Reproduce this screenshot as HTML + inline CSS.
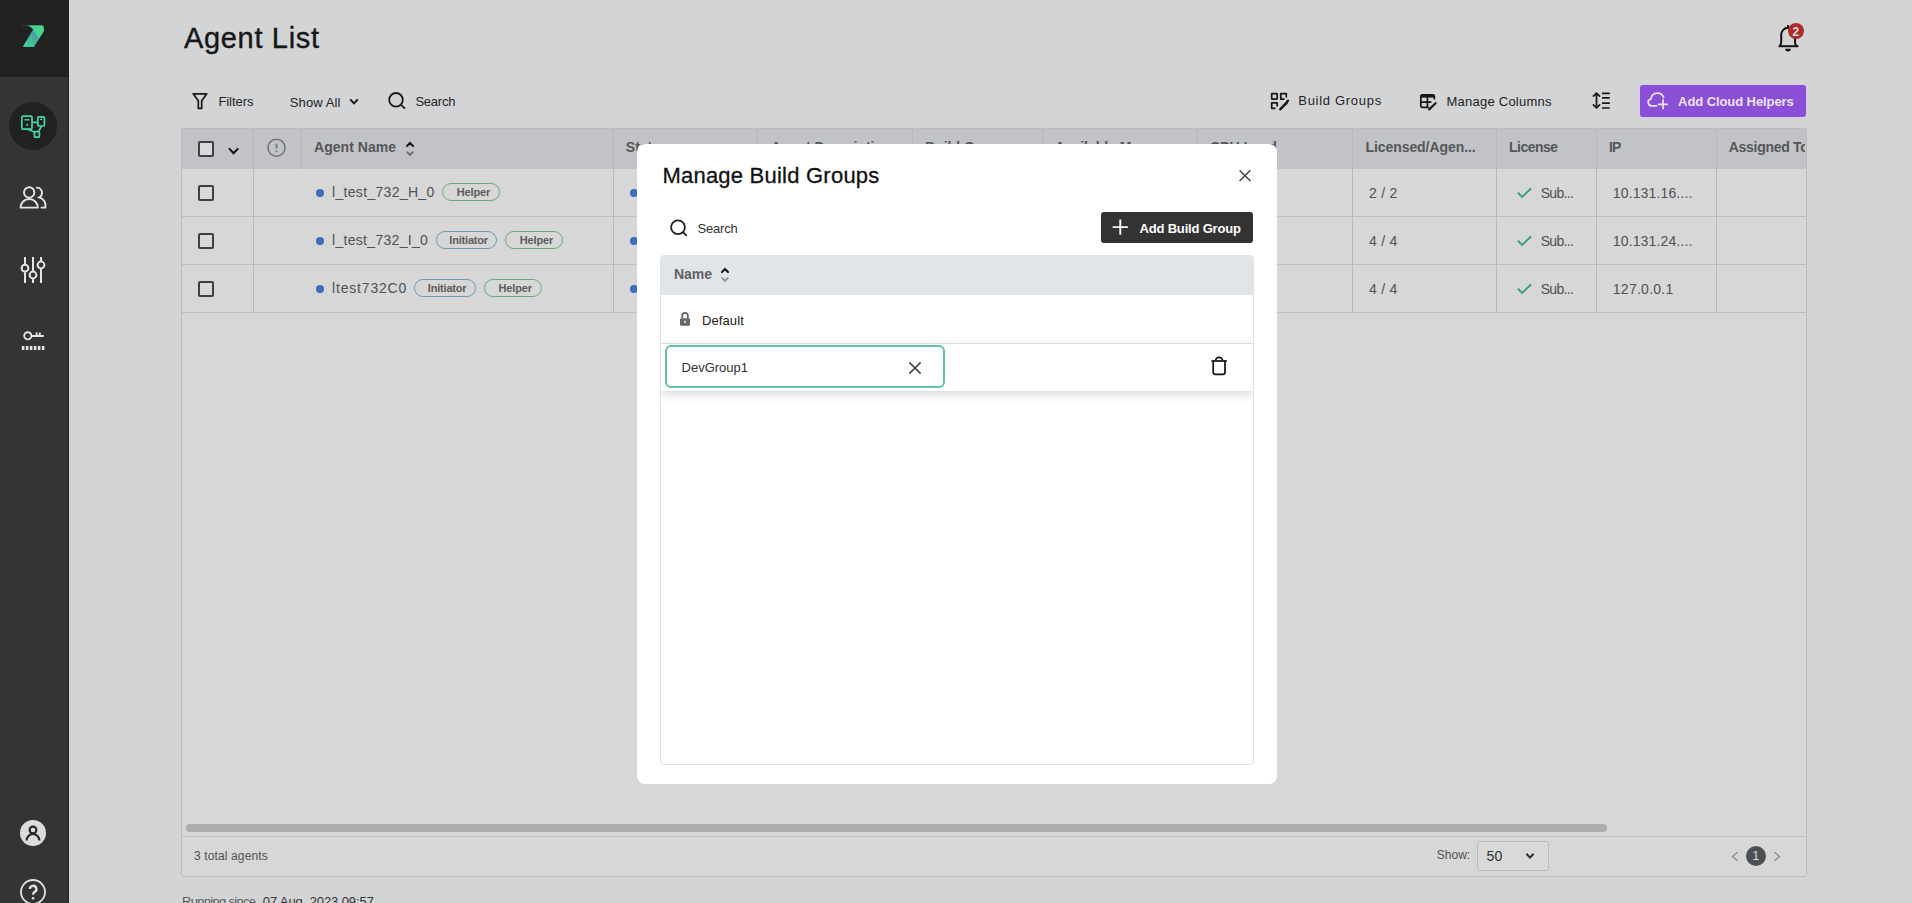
<!DOCTYPE html>
<html><head><meta charset="utf-8">
<style>
*{box-sizing:border-box;margin:0;padding:0}
html,body{width:1912px;height:903px;overflow:hidden}
body{font-family:"Liberation Sans",sans-serif;background:#f8f9fb;position:relative}
.a{position:absolute}
.t{position:absolute;white-space:nowrap;line-height:1}
svg{position:absolute;overflow:visible}
</style></head><body>
<div class="t" style="left:184px;top:24.25px;font-size:29px;color:#1b1c1d;letter-spacing:0.67px;-webkit-text-stroke:0.4px #1b1c1d;">Agent List</div>
<svg style="left:1770px;top:18px" width="40" height="40" viewBox="0 0 40 40" fill="none" stroke="#161616" stroke-width="2" stroke-linejoin="round">
<path d="M8.6 28.2 H28.4"/>
<path d="M9.6 28.2 Q11.2 26.6 11.2 23.8 V17 A6.9 7.2 0 0 1 25 17 V23.8 Q25 26.6 26.6 28.2"/>
<path d="M18 7 V10.4"/>
<path d="M15.2 30.8 A2.8 2.6 0 0 0 20.8 30.8 Z" fill="#161616" stroke="none"/>
</svg><div class="a" style="left:1788px;top:23px;width:16.4px;height:16.4px;border-radius:50%;background:#cc3430"></div><div class="t" style="left:1792.6px;top:25.64px;font-size:12px;color:#fff;font-weight:bold;">2</div>
<svg style="left:190px;top:90px" width="20" height="22" viewBox="0 0 20 22" fill="none" stroke="#1e1e1e" stroke-width="1.7" stroke-linejoin="round">
<path d="M3.2 3.8 H16.8 L11.7 10.8 V18.4 H8.3 V10.8 Z" stroke-linejoin="round"/>
</svg><div class="t" style="left:218.4px;top:94.70px;font-size:13px;color:#2b2c2d;letter-spacing:-0.06px;">Filters</div>
<div class="t" style="left:289.8px;top:95.50px;font-size:13px;color:#2b2c2d;letter-spacing:0.11px;">Show All</div>
<svg style="left:346px;top:94px" width="16" height="16" viewBox="0 0 16 16" fill="none" stroke="#1e1e1e" stroke-width="2">
<path d="M4.2 5.4 L8 9.4 L11.8 5.4"/></svg><svg style="left:386px;top:90px" width="22" height="22" viewBox="0 0 22 22" fill="none" stroke="#1e1e1e" stroke-width="1.8">
<circle cx="10" cy="9.8" r="6.8"/><path d="M15 14.8 L19 18.6"/></svg><div class="t" style="left:415.4px;top:94.70px;font-size:13px;color:#2b2c2d;letter-spacing:-0.24px;">Search</div>
<svg style="left:1262px;top:84px" width="36" height="36" viewBox="0 0 36 36" fill="none" stroke="#1a1a1a" stroke-width="1.7" stroke-linejoin="round">
<rect x="9.7" y="9.7" width="5.5" height="5.5" rx="0.6"/>
<path d="M22.6 15.2 H18.8 V9.7 H24.3 V13.6"/>
<path d="M13.5 24.3 H9.7 V18.8 H15.2 V22.5"/>
<path d="M24.8 18.6 L18.4 25.2" stroke-width="2.6" stroke-linecap="round"/>
<path d="M25.3 17.4 L26 16.7" stroke-width="2.4" stroke-linecap="round"/>
</svg><div class="t" style="left:1298.3px;top:94.20px;font-size:13px;color:#2b2c2d;letter-spacing:0.70px;">Build Groups</div>
<svg style="left:1412px;top:84px" width="36" height="36" viewBox="0 0 36 36" fill="none" stroke="#1a1a1a" stroke-width="1.7" stroke-linejoin="round">
<path d="M22.4 15.4 V12.6 A1.8 1.8 0 0 0 20.6 10.8 H10.6 A1.8 1.8 0 0 0 8.8 12.6 V21.6 A1.8 1.8 0 0 0 10.6 23.4 H16.8"/>
<rect x="8.8" y="10.8" width="13.6" height="2.8" fill="#1a1a1a" stroke="none"/>
<path d="M8.8 18.1 H19.4 M15.4 13 V23.4"/>
<path d="M23.6 19.2 L17.2 25.4" stroke-width="2.2" stroke-linecap="round"/>
</svg><div class="t" style="left:1446.5px;top:94.90px;font-size:13px;color:#2b2c2d;letter-spacing:0.24px;">Manage Columns</div>
<svg style="left:1590px;top:90px" width="22" height="22" viewBox="0 0 22 22" fill="none" stroke="#1e1e1e" stroke-width="1.8">
<path d="M6.5 3 V18 M3.4 6.2 L6.5 3 L9.6 6.2 M3.4 14.8 L6.5 18 L9.6 14.8" stroke-width="1.7" stroke-linecap="round" stroke-linejoin="round"/>
<path d="M12 3.3 H19.8 M12 7.9 H19.8 M12 13.2 H19.8 M12 18 H19.8" stroke-width="1.7"/>
</svg><div class="a" style="left:181px;top:128px;width:1626px;height:749px;background:#fdfdfd;border:1px solid #dcdddf;border-radius:0 0 3px 3px"></div><div class="a" style="left:182px;top:129px;width:1624px;height:40px;background:#e3e6e9"></div><div class="a" style="left:253px;top:129px;width:1px;height:184px;background:#d6d8da"></div><div class="a" style="left:613px;top:129px;width:1px;height:184px;background:#d6d8da"></div><div class="a" style="left:757px;top:129px;width:1px;height:184px;background:#d6d8da"></div><div class="a" style="left:912px;top:129px;width:1px;height:184px;background:#d6d8da"></div><div class="a" style="left:1042px;top:129px;width:1px;height:184px;background:#d6d8da"></div><div class="a" style="left:1197px;top:129px;width:1px;height:184px;background:#d6d8da"></div><div class="a" style="left:1352px;top:129px;width:1px;height:184px;background:#d6d8da"></div><div class="a" style="left:1496px;top:129px;width:1px;height:184px;background:#d6d8da"></div><div class="a" style="left:1596px;top:129px;width:1px;height:184px;background:#d6d8da"></div><div class="a" style="left:1716px;top:129px;width:1px;height:184px;background:#d6d8da"></div><div class="a" style="left:301px;top:129px;width:1px;height:40px;background:#d6d8da"></div><div class="a" style="left:182px;top:216px;width:1624px;height:1px;background:#dfe0e2"></div><div class="a" style="left:182px;top:264px;width:1624px;height:1px;background:#dfe0e2"></div><div class="a" style="left:182px;top:312px;width:1624px;height:1px;background:#dfe0e2"></div><div class="a" style="left:198px;top:141px;width:16px;height:16px;border:2px solid #4a4a4a;border-radius:2px;background:#fff"></div><svg style="left:224px;top:140px" width="20" height="20" viewBox="0 0 20 20" fill="none" stroke="#111" stroke-width="2">
<path d="M5 8.4 L9.6 13.2 L14.2 8.4"/></svg><svg style="left:264px;top:135px" width="26" height="26" viewBox="0 0 26 26" fill="none" stroke="#85888b" stroke-width="1.6">
<circle cx="12.5" cy="12.7" r="8.5"/><path d="M12.5 8.6 V13.4" stroke-width="1.8"/><circle cx="12.5" cy="16.3" r="1" fill="#85888b" stroke="none"/></svg><div class="t" style="left:314px;top:140.15px;font-size:14px;color:#646769;font-weight:bold;letter-spacing:0.04px;">Agent Name</div>
<svg style="left:404px;top:140px" width="12" height="18" viewBox="0 0 12 18" fill="none" stroke-width="1.7" stroke-linecap="round">
<path d="M3 6 L6 3 L9 6" stroke="#161616" stroke-width="2.1"/><path d="M3.2 12.2 L6 15 L8.8 12.2" stroke="#7d8083" stroke-width="1.9"/></svg><div class="t" style="left:625.8px;top:140.15px;font-size:14px;color:#646769;font-weight:bold;">Status</div>
<div class="t" style="left:771px;top:140.15px;font-size:14px;color:#646769;font-weight:bold;">Agent Description</div>
<div class="t" style="left:925px;top:140.15px;font-size:14px;color:#646769;font-weight:bold;">Build Groups</div>
<div class="t" style="left:1055px;top:140.15px;font-size:14px;color:#646769;font-weight:bold;">Available Memory</div>
<div class="t" style="left:1210px;top:140.15px;font-size:14px;color:#646769;font-weight:bold;">CPU Load</div>
<div class="t" style="left:1365.4px;top:140.35px;font-size:14px;color:#646769;font-weight:bold;letter-spacing:-0.06px;">Licensed/Agen...</div>
<div class="t" style="left:1509px;top:140.35px;font-size:14px;color:#646769;font-weight:bold;letter-spacing:-0.52px;">License</div>
<div class="t" style="left:1609px;top:140.35px;font-size:14px;color:#646769;font-weight:bold;letter-spacing:-0.83px;">IP</div>
<div class="a" style="left:1717px;top:129px;width:88px;height:40px;overflow:hidden"><div class="t" style="left:11.8px;top:11.35px;font-size:14px;color:#646769;font-weight:bold;letter-spacing:-0.30px;">Assigned To</div>
</div><div class="a" style="left:198px;top:185px;width:16px;height:16px;border:2px solid #4a4a4a;border-radius:2px;background:#fff"></div><div class="a" style="left:316px;top:189px;width:8px;height:8px;border-radius:50%;background:#4a7fd9"></div><div class="t" style="left:332px;top:185.15px;font-size:14px;color:#5e6163;letter-spacing:0.32px;">l_test_732_H_0</div>
<div class="a" style="left:442px;top:183px;width:58px;height:18px;border:1.2px solid #7cc98a;border-radius:9px"></div><div class="t" style="left:456.65px;top:187.29px;font-size:11px;color:#6a6d70;font-weight:bold;letter-spacing:-0.11px;">Helper</div>
<div class="a" style="left:630px;top:189px;width:8px;height:8px;border-radius:50%;background:#4a7fd9"></div><div class="t" style="left:1368.9px;top:186.45px;font-size:14px;color:#5e6163;letter-spacing:0.29px;">2 / 2</div>
<svg style="left:1514px;top:182px" width="22" height="22" viewBox="0 0 22 22" fill="none" stroke="#4ab995" stroke-width="1.9">
<path d="M3.9 10.8 L8.2 14.9 L17.2 6.2"/></svg><div class="t" style="left:1540.7px;top:186.45px;font-size:14px;color:#5e6163;letter-spacing:-0.66px;">Sub...</div>
<div class="t" style="left:1612.8px;top:186.45px;font-size:14px;color:#5e6163;letter-spacing:0.14px;">10.131.16....</div>
<div class="a" style="left:198px;top:233px;width:16px;height:16px;border:2px solid #4a4a4a;border-radius:2px;background:#fff"></div><div class="a" style="left:316px;top:237px;width:8px;height:8px;border-radius:50%;background:#4a7fd9"></div><div class="t" style="left:332px;top:233.15px;font-size:14px;color:#5e6163;letter-spacing:0.31px;">l_test_732_I_0</div>
<div class="a" style="left:436px;top:231px;width:60.5px;height:18px;border:1.2px solid #7fb6d6;border-radius:9px"></div><div class="t" style="left:449.35px;top:235.29px;font-size:11px;color:#6a6d70;font-weight:bold;letter-spacing:-0.19px;">Initiator</div>
<div class="a" style="left:505px;top:231px;width:58px;height:18px;border:1.2px solid #7cc98a;border-radius:9px"></div><div class="t" style="left:519.65px;top:235.29px;font-size:11px;color:#6a6d70;font-weight:bold;letter-spacing:-0.11px;">Helper</div>
<div class="a" style="left:630px;top:237px;width:8px;height:8px;border-radius:50%;background:#4a7fd9"></div><div class="t" style="left:1368.9px;top:234.45px;font-size:14px;color:#5e6163;letter-spacing:0.29px;">4 / 4</div>
<svg style="left:1514px;top:230px" width="22" height="22" viewBox="0 0 22 22" fill="none" stroke="#4ab995" stroke-width="1.9">
<path d="M3.9 10.8 L8.2 14.9 L17.2 6.2"/></svg><div class="t" style="left:1540.7px;top:234.45px;font-size:14px;color:#5e6163;letter-spacing:-0.66px;">Sub...</div>
<div class="t" style="left:1612.8px;top:234.45px;font-size:14px;color:#5e6163;letter-spacing:0.14px;">10.131.24....</div>
<div class="a" style="left:198px;top:281px;width:16px;height:16px;border:2px solid #4a4a4a;border-radius:2px;background:#fff"></div><div class="a" style="left:316px;top:285px;width:8px;height:8px;border-radius:50%;background:#4a7fd9"></div><div class="t" style="left:332px;top:281.15px;font-size:14px;color:#5e6163;letter-spacing:0.82px;">ltest732C0</div>
<div class="a" style="left:414px;top:279px;width:61.5px;height:18px;border:1.2px solid #7fb6d6;border-radius:9px"></div><div class="t" style="left:427.85px;top:283.29px;font-size:11px;color:#6a6d70;font-weight:bold;letter-spacing:-0.19px;">Initiator</div>
<div class="a" style="left:484px;top:279px;width:57.5px;height:18px;border:1.2px solid #7cc98a;border-radius:9px"></div><div class="t" style="left:498.4px;top:283.29px;font-size:11px;color:#6a6d70;font-weight:bold;letter-spacing:-0.11px;">Helper</div>
<div class="a" style="left:630px;top:285px;width:8px;height:8px;border-radius:50%;background:#4a7fd9"></div><div class="t" style="left:1368.9px;top:282.45px;font-size:14px;color:#5e6163;letter-spacing:0.29px;">4 / 4</div>
<svg style="left:1514px;top:278px" width="22" height="22" viewBox="0 0 22 22" fill="none" stroke="#4ab995" stroke-width="1.9">
<path d="M3.9 10.8 L8.2 14.9 L17.2 6.2"/></svg><div class="t" style="left:1540.7px;top:282.45px;font-size:14px;color:#5e6163;letter-spacing:-0.66px;">Sub...</div>
<div class="t" style="left:1612.8px;top:282.45px;font-size:14px;color:#5e6163;letter-spacing:0.26px;">127.0.0.1</div>
<div class="a" style="left:186px;top:824px;width:1421px;height:8px;border-radius:4px;background:#cbcccd"></div><div class="a" style="left:182px;top:836px;width:1624px;height:1px;background:#e4e5e6"></div><div class="t" style="left:193.9px;top:849.54px;font-size:12px;color:#5e6163;letter-spacing:0.14px;">3 total agents</div>
<div class="t" style="left:1436.8px;top:848.94px;font-size:12px;color:#5e6163;letter-spacing:0.01px;">Show:</div>
<div class="a" style="left:1477px;top:841px;width:72px;height:30px;border:1px solid #dadbdc;border-radius:3px;background:#fff"></div><div class="t" style="left:1486.6px;top:849.25px;font-size:14px;color:#3a3b3c;letter-spacing:0.23px;">50</div>
<svg style="left:1522px;top:848px" width="16" height="16" viewBox="0 0 16 16" fill="none" stroke="#333" stroke-width="2">
<path d="M4.4 5.8 L8 9.6 L11.6 5.8"/></svg><svg style="left:1726px;top:846px" width="60" height="20" viewBox="0 0 60 20" fill="none" stroke="#a7a9ab" stroke-width="1.4">
<path d="M11.6 6 L6.6 10.5 L11.6 15 M48.4 6 L53.4 10.5 L48.4 15"/></svg><div class="a" style="left:1746px;top:846px;width:20px;height:20px;border-radius:50%;background:#5b5e61"></div><div class="t" style="left:1752.6px;top:850.44px;font-size:12px;color:#fff;">1</div>
<div class="t" style="left:182px;top:895.00px;font-size:13px;color:#6a6c6e;letter-spacing:-0.70px;">Running since</div>
<div class="t" style="left:262.8px;top:895.00px;font-size:13px;color:#3a3b3c;letter-spacing:-0.10px;">07 Aug, 2023 09:57</div>
<div class="a" style="left:0;top:0;width:1912px;height:903px;background:rgba(0,0,0,0.15)"></div><div class="a" style="left:1640px;top:85px;width:166px;height:32px;border-radius:3px;background:#8a4fd6;box-shadow:0 0 0 1px #d9c9f2"></div><svg style="left:1640px;top:85px" width="40" height="32" viewBox="0 0 40 32" fill="none" stroke="#e9dff7" stroke-width="1.8" stroke-linecap="round">
<path d="M16.6 20.8 H11.6 A3.5 3.5 0 0 1 10.9 13.9 A6.6 6.6 0 0 1 23.6 12.4"/>
<path d="M23 15 V23.6 M18.6 19.3 H27.4"/>
</svg><div class="t" style="left:1678.1px;top:94.80px;font-size:13px;color:#ece3f8;font-weight:bold;letter-spacing:-0.08px;">Add Cloud Helpers</div>
<div class="a" style="left:0;top:0;width:69px;height:903px;background:#343434"></div><div class="a" style="left:0;top:0;width:69px;height:77px;background:#212121"></div><div class="a" style="left:68px;top:77px;width:1px;height:826px;background:#272727"></div><svg style="left:15px;top:18px" width="36" height="36" viewBox="0 0 36 36">
<defs><linearGradient id="lg" x1="22" y1="15" x2="11" y2="28" gradientUnits="userSpaceOnUse"><stop offset="0" stop-color="#4a95a9"/><stop offset="1" stop-color="#46cf92"/></linearGradient></defs>
<path d="M7.2 7.4 C12 7.0 16 8.5 18.3 11.6 L8 28.8 L18.8 28.8 L28.9 13.2 L28.9 9.6 Q28.9 7.2 26.5 7.2 Z" fill="#48d392"/>
<path d="M18.3 11.6 L23.6 21 L18.8 28.8 L8 28.8 Z" fill="url(#lg)"/>
</svg><div class="a" style="left:9px;top:102px;width:48px;height:48px;border-radius:50%;background:#212121"></div><svg style="left:0;top:0" width="69" height="160" viewBox="0 0 69 160" fill="none" stroke="#48d6a0" stroke-width="1.7" stroke-linejoin="round">
<rect x="21.8" y="116.2" width="10.2" height="13" rx="1.2"/>
<line x1="24.5" y1="119.8" x2="29.5" y2="119.8" stroke-width="1.4"/>
<rect x="26.3" y="123.9" width="1.8" height="1.8" fill="#48d6a0" stroke="none"/>
<rect x="37.8" y="116.8" width="6.6" height="9.2" rx="1"/>
<line x1="40" y1="119.4" x2="42.2" y2="119.4" stroke-width="1.2"/>
<rect x="34.4" y="131.6" width="5" height="5.6" rx="0.8"/>
<path d="M32 122.4 L37.8 122.4 M27.5 129.2 L34.6 132 M41.5 126 L38.6 131.6"/>
</svg><svg style="left:15px;top:180px" width="36" height="36" viewBox="0 0 36 36" fill="none" stroke="#e4e4e4" stroke-width="1.9" stroke-linecap="round">
<circle cx="14.2" cy="12.4" r="5.2"/>
<path d="M5.6 27.6 L22.8 27.6 A8.6 8.6 0 0 0 5.6 27.6 Z"/>
<path d="M21.8 7.6 A5.2 5.2 0 0 1 24.2 17.4 A8.6 8.6 0 0 1 30.4 27.6 L26.4 27.6"/>
</svg><svg style="left:15px;top:251px" width="36" height="36" viewBox="0 0 36 36" fill="none" stroke="#e4e4e4" stroke-width="2">
<path d="M10 6 V13.2 M10 21.2 V32 M18 6 V20 M18 28 V32 M26 6 V10 M26 18 V32"/>
<circle cx="10" cy="17.2" r="3.4"/><circle cx="18" cy="24" r="3.4"/><circle cx="26" cy="14" r="3.4"/>
</svg><svg style="left:15px;top:322px" width="36" height="36" viewBox="0 0 36 36" fill="none" stroke="#e4e4e4" stroke-width="1.9">
<circle cx="12.8" cy="13.8" r="3.6"/>
<path d="M16.4 14 H28.8 M21.6 10.6 V14 M24.8 10.6 V14"/>
<g fill="#e4e4e4" stroke="none"><rect x="6.8" y="24" width="2.6" height="4"/><rect x="10.8" y="24" width="2.6" height="4"/><rect x="14.8" y="24" width="2.6" height="4"/><rect x="18.8" y="24" width="2.6" height="4"/><rect x="22.8" y="24" width="2.6" height="4"/><rect x="26.8" y="24" width="2.6" height="4"/></g>
</svg><div class="a" style="left:20px;top:820px;width:26px;height:26px;border-radius:50%;background:#dcdcdc"></div><svg style="left:20px;top:820px" width="26" height="26" viewBox="0 0 26 26" fill="none" stroke="#262626" stroke-width="2.1">
<circle cx="13" cy="10" r="3.4"/><path d="M6.6 20.6 A6.4 6.6 0 0 1 19.4 20.6"/>
</svg><svg style="left:20px;top:879px" width="26" height="26" viewBox="0 0 26 26" fill="none" stroke="#e0e0e0" stroke-width="1.8">
<circle cx="13" cy="13" r="12"/><path d="M9.8 10 A3.3 3.3 0 1 1 14.4 13.1 C13.4 13.6 13.1 14.3 13.1 15.8" stroke-width="2.3"/><circle cx="13.1" cy="19.2" r="1.3" fill="#e0e0e0" stroke="none"/>
</svg><div class="a" style="left:637px;top:144px;width:640px;height:640px;background:#fff;border-radius:8px"></div><div class="t" style="left:662.4px;top:165.38px;font-size:22px;color:#111213;letter-spacing:0.23px;-webkit-text-stroke:0.3px #111213;">Manage Build Groups</div>
<svg style="left:1234px;top:165px" width="22" height="22" viewBox="0 0 22 22" fill="none" stroke="#4a4a4a" stroke-width="1.6">
<path d="M5.6 5.2 L16.4 16 M16.4 5.2 L5.6 16"/></svg><svg style="left:668px;top:217px" width="22" height="22" viewBox="0 0 22 22" fill="none" stroke="#1e1e1e" stroke-width="1.8">
<circle cx="10" cy="10.2" r="6.9"/><path d="M15 15.2 L18.8 18.8"/></svg><div class="t" style="left:697.6px;top:222.00px;font-size:13px;color:#333;letter-spacing:-0.22px;">Search</div>
<div class="a" style="left:1101px;top:212px;width:152px;height:31px;border-radius:3px;background:#333333"></div><svg style="left:1101px;top:212px" width="40" height="31" viewBox="0 0 40 31" fill="none" stroke="#fff" stroke-width="1.9">
<path d="M19.3 7.5 V22.7 M11.7 15.1 H26.9"/></svg><div class="t" style="left:1139.5px;top:222.00px;font-size:13px;color:#ffffff;font-weight:bold;letter-spacing:-0.18px;">Add Build Group</div>
<div class="a" style="left:660px;top:255px;width:594px;height:510px;border:1px solid #dfe1e3;border-radius:4px;background:#fff"></div><div class="a" style="left:661px;top:256px;width:592px;height:39px;background:#e2e5e8"></div><div class="t" style="left:674px;top:267.45px;font-size:14px;color:#5f6265;font-weight:bold;letter-spacing:-0.04px;">Name</div>
<svg style="left:719px;top:266px" width="12" height="18" viewBox="0 0 12 18" fill="none" stroke-width="1.7" stroke-linecap="round">
<path d="M3 6 L6 3 L9 6" stroke="#111" stroke-width="2.1"/><path d="M3.2 12.2 L6 15 L8.8 12.2" stroke="#8e9194" stroke-width="1.9"/></svg><div class="a" style="left:661px;top:343px;width:592px;height:1px;background:#e3e4e5"></div><svg style="left:676px;top:309px" width="18" height="20" viewBox="0 0 18 20" fill="none">
<path d="M6.2 9.6 V6.6 A2.8 2.8 0 0 1 11.8 6.6 V9.6" stroke="#666" stroke-width="1.8"/>
<rect x="4" y="9.2" width="10" height="7.6" rx="1.4" fill="#666"/>
<rect x="8.2" y="11.6" width="1.6" height="2.6" fill="#ddd"/></svg><div class="t" style="left:702.1px;top:313.70px;font-size:13px;color:#222;letter-spacing:0.08px;">Default</div>
<div class="a" style="left:661px;top:300px;width:592px;height:130px;overflow:hidden"><div class="a" style="left:0;top:44px;width:592px;height:47px;background:#fff;box-shadow:0 3px 10px rgba(0,0,0,0.16)"></div></div><div class="a" style="left:665px;top:345px;width:280px;height:43px;border:2px solid #62c2a2;border-radius:6px;background:#fff"></div><div class="t" style="left:681.6px;top:360.80px;font-size:13px;color:#333;letter-spacing:-0.01px;">DevGroup1</div>
<svg style="left:904px;top:357px" width="22" height="22" viewBox="0 0 22 22" fill="none" stroke="#4a4a4a" stroke-width="1.7">
<path d="M5.4 5.4 L16.6 16.6 M16.6 5.4 L5.4 16.6"/></svg><svg style="left:1208px;top:354px" width="22" height="24" viewBox="0 0 22 24" fill="none" stroke="#111" stroke-width="1.7">
<path d="M3.4 7 H18.8"/><path d="M7.6 6.8 A3.4 3.4 0 0 1 14.6 6.8"/>
<path d="M5.2 7 V18.2 A2.2 2.2 0 0 0 7.4 20.4 H14.8 A2.2 2.2 0 0 0 17 18.2 V7"/></svg></body></html>
